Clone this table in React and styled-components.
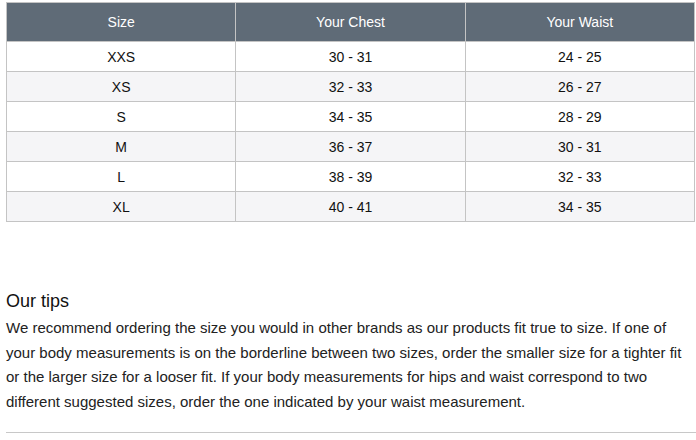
import React from 'react';
import styled, { createGlobalStyle } from 'styled-components';

const GlobalStyle = createGlobalStyle`
  body {
    margin: 0;
    background: #ffffff;
    font-family: "Liberation Sans", Arial, sans-serif;
    color: #222222;
  }
`;

const sizes = [
  { size: 'XXS', chest: '30 - 31', waist: '24 - 25' },
  { size: 'XS', chest: '32 - 33', waist: '26 - 27' },
  { size: 'S', chest: '34 - 35', waist: '28 - 29' },
  { size: 'M', chest: '36 - 37', waist: '30 - 31' },
  { size: 'L', chest: '38 - 39', waist: '32 - 33' },
  { size: 'XL', chest: '40 - 41', waist: '34 - 35' },
];

export default function App() {
  return (
    <Page>
      <GlobalStyle />
      <SizeTable>
        <thead>
          <tr>
            <HeadCell>Size</HeadCell>
            <HeadCell>Your Chest</HeadCell>
            <HeadCell>Your Waist</HeadCell>
          </tr>
        </thead>
        <tbody>
          {sizes.map((row, i) => (
            <Row key={row.size} $striped={i % 2 === 1}>
              <Cell>{row.size}</Cell>
              <Cell>{row.chest}</Cell>
              <Cell>{row.waist}</Cell>
            </Row>
          ))}
        </tbody>
      </SizeTable>
      <Tips>
        <TipsTitle>Our tips</TipsTitle>
        <TipsText>
          We recommend ordering the size you would in other brands as our products fit true to size. If one of
          your body measurements is on the borderline between two sizes, order the smaller size for a tighter fit
          or the larger size for a looser fit. If your body measurements for hips and waist correspond to two
          different suggested sizes, order the one indicated by your waist measurement.
        </TipsText>
      </Tips>
      <Divider />
    </Page>
  );
}

const Page = styled.div`
  padding: 2px 0 0 6px;
`

const SizeTable = styled.table`
  width: 689px;
  table-layout: fixed;
  border-collapse: collapse;
  border: 1px solid #c4c4c4;
`

const HeadCell = styled.th`
  width: 33.33%;
  height: 38px;
  padding: 0;
  background: #5f6b77;
  color: #ffffff;
  font-weight: normal;
  font-size: 14px;
  border: 1px solid #c4c4c4;
  border-top: none;
`

const Row = styled.tr`
  background: ${p => (p.$striped ? '#f5f5f7' : '#ffffff')};
`

const Cell = styled.td`
  height: 29px;
  padding: 0;
  text-align: center;
  font-size: 14px;
  color: #111111;
  border: 1px solid #c4c4c4;
`

const Tips = styled.div`
  margin-top: 68px;
`

const TipsTitle = styled.h3`
  margin: 0;
  font-size: 18px;
  font-weight: normal;
  color: #111111;
  line-height: 22px;
`

const TipsText = styled.p`
  max-width: 689px;
  margin: 4px 0 0;
  font-size: 15px;
  line-height: 24.5px;
  color: #222222;
`

const Divider = styled.hr`
  margin: 18px 0 0;
  border: none;
  border-top: 1px solid #c8c8c8;
`
